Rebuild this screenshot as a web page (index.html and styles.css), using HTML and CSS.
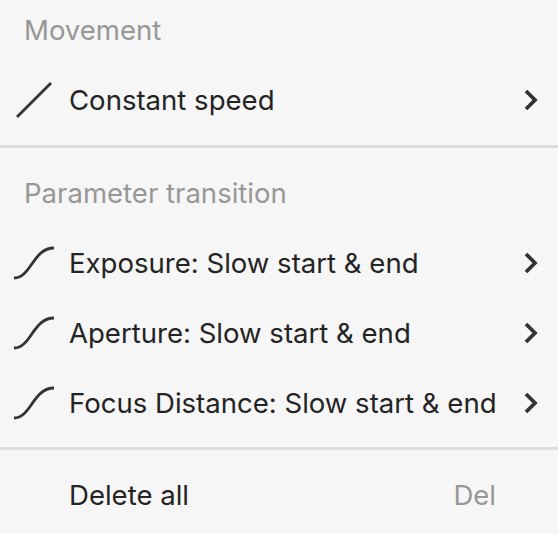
FILE: index.html
```html
<!DOCTYPE html>
<html lang="en">
<head>
    <meta charset="UTF-8">
    <title>Keyframe menu</title>
    <link rel="stylesheet" href="styles.css">
</head>
<body>
    <div class="menu">
        <div class="menu-title">Movement</div>
        <div class="menu-row">
            <svg class="curve" viewBox="0 0 40 36"><path d="M3 35 L37 1"/></svg>
            <span class="menu-label">Constant speed</span>
            <svg class="chevron" viewBox="0 0 14 22"><path d="M2 2 L11 11 L2 20"/></svg>
        </div>
        <div class="divider"></div>
        <div class="menu-title">Parameter transition</div>
        <div class="menu-row">
            <svg class="curve" viewBox="0 0 40 36"><path d="M0 33 C17 33 19 3 40 3"/></svg>
            <span class="menu-label">Exposure: Slow start &amp; end</span>
            <svg class="chevron" viewBox="0 0 14 22"><path d="M2 2 L11 11 L2 20"/></svg>
        </div>
        <div class="menu-row">
            <svg class="curve" viewBox="0 0 40 36"><path d="M0 33 C17 33 19 3 40 3"/></svg>
            <span class="menu-label">Aperture: Slow start &amp; end</span>
            <svg class="chevron" viewBox="0 0 14 22"><path d="M2 2 L11 11 L2 20"/></svg>
        </div>
        <div class="menu-row">
            <svg class="curve" viewBox="0 0 40 36"><path d="M0 33 C17 33 19 3 40 3"/></svg>
            <span class="menu-label">Focus Distance: Slow start &amp; end</span>
            <svg class="chevron" viewBox="0 0 14 22"><path d="M2 2 L11 11 L2 20"/></svg>
        </div>
        <div class="divider"></div>
        <div class="menu-row">
            <span class="curve"></span>
            <span class="menu-label">Delete all</span>
            <span class="shortcut">Del</span>
        </div>
    </div>
</body>
</html>
```

FILE: styles.css
```css
html, body {
    margin: 0;
    padding: 0;
}
body {
    width: 558px;
    height: 534px;
    overflow: hidden;
    background-color: #F6F6F6;
    font-family: Inter, sans-serif;
    color: #242424;
}
.menu {
    display: flex;
    flex-direction: column;
    padding-top: 7px;
}
.menu-title {
    height: 46px;
    line-height: 46px;
    margin-bottom: 12px;
    padding-left: 24px;
    font-size: 27.55px;
    color: #979797;
}
.menu-row {
    display: flex;
    align-items: center;
    height: 70px;
    padding-left: 14px;
    padding-right: 20px;
    font-size: 27.55px;
}
.curve {
    width: 40px;
    height: 36px;
    margin-right: 15px;
    flex-shrink: 0;
}
.curve path, .chevron path {
    fill: none;
    stroke: #333333;
}
.curve path {
    stroke-width: 2.8;
}
.chevron path {
    stroke-width: 3.8;
}
.menu-label {
    flex: 1;
    white-space: nowrap;
}
.chevron {
    width: 14px;
    height: 22px;
    flex-shrink: 0;
}
.shortcut {
    color: #979797;
    padding-right: 42px;
}
.divider {
    height: 3px;
    background-color: #DCDCDC;
    margin-top: 10px;
    margin-bottom: 22px;
}
.divider:nth-last-child(2) {
    margin-top: 9px;
    margin-bottom: 10px;
}
```
